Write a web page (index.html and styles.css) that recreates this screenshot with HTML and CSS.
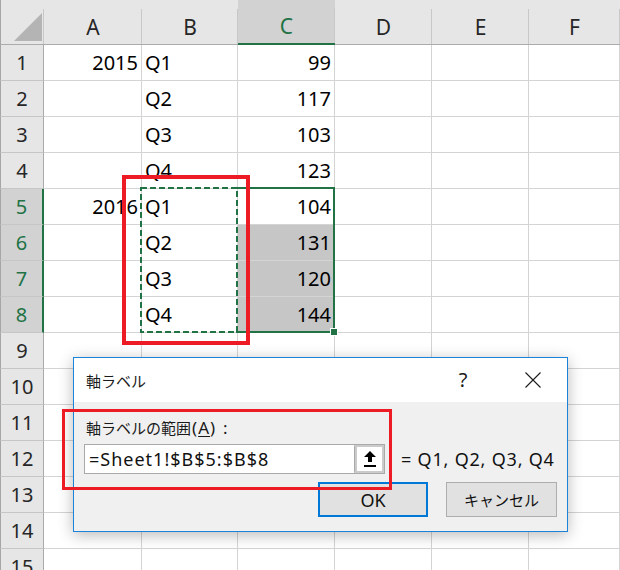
FILE: index.html
```html
<!DOCTYPE html>
<html lang="ja">
<head>
<meta charset="utf-8">
<title>軸ラベル</title>
<link rel="stylesheet" href="styles.css">
</head>
<body>
<div class="page">
  <div class="sheet">
    <div class="corner"><div class="tri"></div></div>
    <div class="ch">A</div><div class="ch">B</div><div class="ch csel">C</div><div class="ch">D</div><div class="ch">E</div><div class="ch">F</div>

    <div class="rh">1</div><div class="c num">2015</div><div class="c txt">Q1</div><div class="c num">99</div><div class="c"></div><div class="c"></div><div class="c"></div>
    <div class="rh">2</div><div class="c"></div><div class="c txt">Q2</div><div class="c num">117</div><div class="c"></div><div class="c"></div><div class="c"></div>
    <div class="rh">3</div><div class="c"></div><div class="c txt">Q3</div><div class="c num">103</div><div class="c"></div><div class="c"></div><div class="c"></div>
    <div class="rh">4</div><div class="c"></div><div class="c txt">Q4</div><div class="c num">123</div><div class="c"></div><div class="c"></div><div class="c"></div>
    <div class="rh rsel">5</div><div class="c num">2016</div><div class="c txt">Q1</div><div class="c num">104</div><div class="c"></div><div class="c"></div><div class="c"></div>
    <div class="rh rsel">6</div><div class="c"></div><div class="c txt">Q2</div><div class="c num hl">131</div><div class="c"></div><div class="c"></div><div class="c"></div>
    <div class="rh rsel">7</div><div class="c"></div><div class="c txt">Q3</div><div class="c num hl">120</div><div class="c"></div><div class="c"></div><div class="c"></div>
    <div class="rh rsel">8</div><div class="c"></div><div class="c txt">Q4</div><div class="c num hl">144</div><div class="c"></div><div class="c"></div><div class="c"></div>
    <div class="rh">9</div><div class="c"></div><div class="c"></div><div class="c"></div><div class="c"></div><div class="c"></div><div class="c"></div>
    <div class="rh">10</div><div class="c"></div><div class="c"></div><div class="c"></div><div class="c"></div><div class="c"></div><div class="c"></div>
    <div class="rh">11</div><div class="c"></div><div class="c"></div><div class="c"></div><div class="c"></div><div class="c"></div><div class="c"></div>
    <div class="rh">12</div><div class="c"></div><div class="c"></div><div class="c"></div><div class="c"></div><div class="c"></div><div class="c"></div>
    <div class="rh">13</div><div class="c"></div><div class="c"></div><div class="c"></div><div class="c"></div><div class="c"></div><div class="c"></div>
    <div class="rh">14</div><div class="c"></div><div class="c"></div><div class="c"></div><div class="c"></div><div class="c"></div><div class="c"></div>
    <div class="rh">15</div><div class="c"></div><div class="c"></div><div class="c"></div><div class="c"></div><div class="c"></div><div class="c"></div>
  </div>

  <div class="selection"></div>
  <svg class="marquee" width="100" height="146" viewBox="0 0 100 146"><rect x="1" y="1" width="96" height="144" fill="none" stroke="#217346" stroke-width="2" stroke-dasharray="6 3"/></svg>
  <div class="handle"></div>
  <div class="mark mark1"></div>

  <div class="dialog">
    <div class="titlebar">
      <span class="title">軸ラベル</span>
      <span class="help">?</span>
      <svg class="close" width="16" height="16" viewBox="0 0 16 16"><path d="M0.5 0.5 L15.5 15.5 M15.5 0.5 L0.5 15.5" stroke="#1a1a1a" stroke-width="1.1" fill="none"/></svg>
    </div>
    <div class="dbody">
      <div class="label"><span class="jp">軸ラベルの範囲</span><span class="lat">(<u>A</u>)</span><span class="colon">:</span></div>
      <div class="inrow">
        <div class="input">
          <span class="intext">=Sheet1!$B$5:$B$8</span>
          <span class="pick"><svg width="12" height="17" viewBox="0 0 12 17"><polygon points="6,0 12,6 8,6 8,11 4,11 4,6 0,6" fill="#000"/><rect x="0" y="14" width="12" height="2" fill="#000"/></svg></span>
        </div>
        <span class="result">= Q1, Q2, Q3, Q4</span>
      </div>
      <div class="btns">
        <div class="btn ok">OK</div>
        <div class="btn cancel">キャンセル</div>
      </div>
    </div>
  </div>
  <div class="mark mark2"></div>
</div>
</body>
</html>
```
FILE: styles.css
```css
* { box-sizing: border-box; }
html, body { margin: 0; padding: 0; }
body {
  background: #fff;
  font-family: "Noto Sans", "Noto Sans CJK JP", sans-serif;
  color: #000;
}
.page {
  position: relative;
  width: 620px;
  height: 570px;
  overflow: hidden;
}
.sheet {
  display: grid;
  grid-template-columns: 44px 98px 96px 97px 97px 97px 91px;
  grid-template-rows: 45px repeat(15, 36px);
}
.corner {
  background: linear-gradient(#c8c8c8, #c8c8c8) right bottom / 1px 35px no-repeat, #e6e6e6;
  border-left: 1px solid #a6a6a6;
  border-bottom: 1px solid #ababab;
  display: flex;
  align-items: flex-end;
  justify-content: flex-end;
  padding: 0 2px 3px 0;
}
.tri {
  width: 28px;
  height: 28px;
  background: #b4b4b4;
  clip-path: polygon(100% 0, 100% 100%, 0 100%);
}
.ch {
  background: linear-gradient(#c8c8c8, #c8c8c8) right bottom / 1px 35px no-repeat, #e6e6e6;
  border-bottom: 1px solid #ababab;
  display: flex;
  align-items: center;
  justify-content: center;
  padding-top: 9px;
  font-size: 21px;
  color: #262626;
}
.ch.csel {
  background: linear-gradient(#c8c8c8, #c8c8c8) right bottom / 1px 35px no-repeat, #d2d2d2;
  border-bottom: 2px solid #217346;
  color: #217346;
}
.rh {
  background: #e6e6e6;
  border-left: 1px solid #a6a6a6;
  border-right: 1px solid #ababab;
  border-bottom: 1px solid #c6c6c6;
  display: flex;
  align-items: center;
  justify-content: center;
  font-size: 20px;
  color: #262626;
}
.rh.rsel {
  background: #d2d2d2;
  color: #217346;
  border-right: 2px solid #217346;
}
.c {
  border-right: 1px solid #d4d4d4;
  border-bottom: 1px solid #d4d4d4;
  display: flex;
  align-items: center;
  font-size: 20px;
  padding: 0 3px;
  white-space: nowrap;
}
.c.num { justify-content: flex-end; }
.c.txt { justify-content: flex-start; }
.c.hl { background: #c6c6c6; }

.marquee {
  position: absolute;
  left: 140px;
  top: 187px;
}
.selection {
  position: absolute;
  left: 236px;
  top: 187px;
  width: 99px;
  height: 146px;
  border: 2px solid #217346;
  border-left: none;
}
.handle {
  position: absolute;
  left: 330px;
  top: 328px;
  width: 8px;
  height: 8px;
  background: #217346;
  border: 1px solid #fff;
}
.mark {
  position: absolute;
  border: 3px solid #ed1c24;
}
.mark1 {
  left: 122px;
  top: 175px;
  width: 128px;
  height: 170px;
  border-width: 4px;
}
.mark2 {
  left: 62px;
  top: 409px;
  width: 330px;
  height: 81px;
}

.dialog {
  position: absolute;
  left: 73px;
  top: 357px;
  width: 495px;
  height: 175px;
  border: 1px solid #1c84d8;
  background: #f0f0f0;
  box-shadow: 0 3px 14px rgba(0, 0, 0, 0.28);
  display: flex;
  flex-direction: column;
}
.titlebar {
  height: 44px;
  background: #fff;
  display: flex;
  align-items: center;
  padding: 0 26px 0 12px;
}
.title {
  flex: 1;
  font-family: "Noto Sans CJK JP", sans-serif;
  font-size: 15px;
  color: #1a1a1a;
}
.help {
  width: 20px;
  text-align: center;
  margin-right: 52px;
  font-size: 20px;
  color: #1a1a1a;
  line-height: 1;
}
.close { display: block; }
.dbody {
  flex: 1;
  padding: 16px 10px 0 10px;
}
.label {
  height: 20px;
  line-height: 20px;
  padding-left: 2px;
  display: flex;
  align-items: center;
  color: #1a1a1a;
}
.label .jp {
  font-family: "Noto Sans CJK JP", sans-serif;
  font-size: 15px;
}
.label .lat {
  font-size: 17px;
  letter-spacing: 1px;
  margin-left: 1px;
}
.label .lat u { text-underline-offset: 2px; text-decoration-thickness: 1px; }
.label .colon {
  font-size: 17px;
  margin-left: 7px;
}
.inrow {
  display: flex;
  align-items: center;
  margin-top: 6px;
  white-space: nowrap;
}
.input {
  flex: none;
  width: 301px;
  height: 30px;
  border: 1px solid #a9a9a9;
  background: #fff;
  display: flex;
  align-items: stretch;
}
.intext {
  flex: 1;
  display: flex;
  align-items: center;
  padding-left: 4px;
  font-size: 18px;
  letter-spacing: 1px;
  color: #111;
}
.pick {
  width: 30px;
  display: flex;
  align-items: center;
  justify-content: center;
  background: #fff;
  border: 2px solid #cbcbcb;
  border-left: 1px solid #a9a9a9;
  box-shadow: inset 2px 0 0 #cbcbcb;
}
.pick svg { display: block; margin-left: 2px; }
.result {
  flex: none;
  margin-left: 16px;
  font-size: 18px;
  letter-spacing: 0.8px;
  white-space: nowrap;
  color: #111;
}
.btns {
  display: flex;
  justify-content: flex-end;
  gap: 18px;
  margin-top: 8px;
}
.btn {
  height: 35px;
  background: #e1e1e1;
  display: flex;
  align-items: center;
  justify-content: center;
  color: #111;
}
.btn.ok {
  width: 110px;
  border: 2px solid #0078d7;
  font-size: 18px;
}
.btn.cancel {
  width: 111px;
  border: 1px solid #adadad;
  font-family: "Noto Sans CJK JP", sans-serif;
  font-size: 15px;
}
```
